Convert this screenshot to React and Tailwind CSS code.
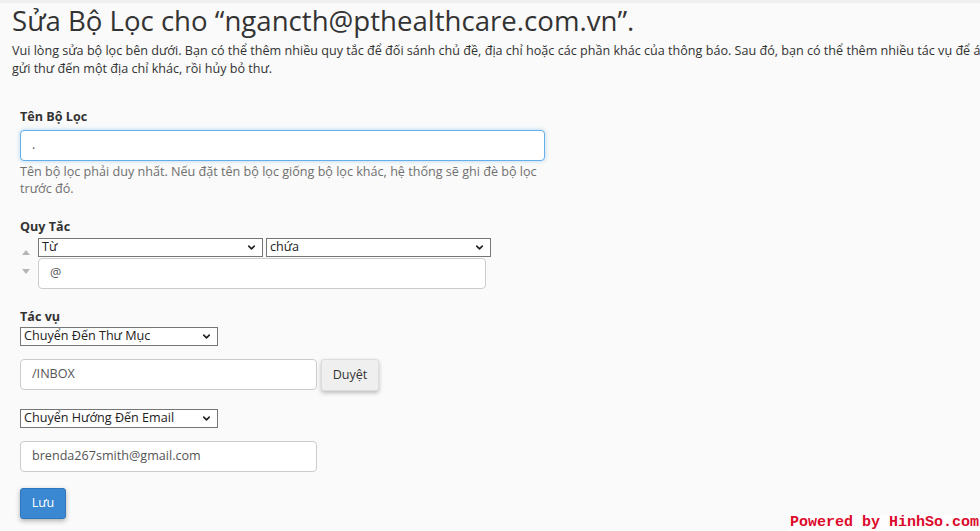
import { ChevronDown } from "lucide-react";

const font = { fontFamily: '"Open Sans", "Noto Sans", sans-serif' };

function FakeSelect({ value, className = "" }) {
  return (
    <div className={`flex items-center justify-between bg-white border border-[#767676] pl-[3px] pr-[5px] text-[12.6px] leading-none text-[#222] ${className}`}>
      <span>{value}</span>
      <ChevronDown className="w-[11px] h-[11px] text-[#222]" strokeWidth={3.5} />
    </div>
  );
}

function TextBox({ value, className = "" }) {
  return (
    <div className={`flex items-center bg-white border border-[#ccc] rounded-[4px] px-[11px] text-[12.6px] text-[#555] ${className}`}>
      {value}
    </div>
  );
}

export default function App() {
  return (
    <div className="w-[980px] h-[531px] overflow-hidden bg-[#fafafa] border-t-[3px] border-[#efefef] relative" style={font}>
      <div className="pl-3">
        <h1 className="text-[27.6px] leading-[36px] text-[#333] mt-[-1px] whitespace-nowrap">
          Sửa Bộ Lọc cho “ngancth@pthealthcare.com.vn”.
        </h1>
        <div className="mt-[4px] text-[12.6px] leading-[18px] text-[#333] whitespace-nowrap">
          <p>Vui lòng sửa bộ lọc bên dưới. Bạn có thể thêm nhiều quy tắc để đối sánh chủ đề, địa chỉ hoặc các phần khác của thông báo. Sau đó, bạn có thể thêm nhiều tác vụ để áp dụng cho thư như</p>
          <p>gửi thư đến một địa chỉ khác, rồi hủy bỏ thư.</p>
        </div>
      </div>

      <div className="pl-5 mt-[30px] w-[545px]">
        <label className="block text-[12.6px] font-bold leading-[18px] text-[#333]">Tên Bộ Lọc</label>
        <div className="mt-[4px] h-[31px] bg-white border border-[#66afe9] rounded-[4px] shadow-[0_0_4px_rgba(102,175,233,0.5)] flex items-center px-[11px] text-[12.6px] text-[#555]">.</div>
        <p className="mt-[2px] text-[12.6px] leading-[17px] text-[#707070]">
          Tên bộ lọc phải duy nhất. Nếu đặt tên bộ lọc giống bộ lọc khác, hệ thống sẽ ghi đè bộ lọc trước đó.
        </p>

        <label className="block mt-[21px] text-[12.6px] font-bold leading-[18px] text-[#333]">Quy Tắc</label>
        <div className="flex mt-[2px]">
          <div className="w-[18px] flex flex-col items-start pt-[12px] pl-[2px] gap-[14px]">
            <div className="w-0 h-0 border-l-[4px] border-r-[4px] border-b-[5px] border-l-transparent border-r-transparent border-b-[#b5b5b5]" />
            <div className="w-0 h-0 border-l-[4px] border-r-[4px] border-t-[5px] border-l-transparent border-r-transparent border-t-[#b5b5b5]" />
          </div>
          <div className="flex flex-col">
            <div className="flex gap-[3px]">
              <FakeSelect value="Từ" className="w-[225px] h-[19px]" />
              <FakeSelect value="chứa" className="w-[225px] h-[19px]" />
            </div>
            <TextBox value="@" className="w-[448px] h-[31px] mt-[1px]" />
          </div>
        </div>

        <label className="block mt-[19px] text-[12.6px] font-bold leading-[18px] text-[#333]">Tác vụ</label>
        <FakeSelect value="Chuyển Đến Thư Mục" className="w-[198px] h-[19px] mt-[1px]" />
        <div className="flex gap-[4px] mt-[13px]">
          <TextBox value="/INBOX" className="w-[297px] h-[31px]" />
          <div className="w-[58px] h-[32px] flex items-center justify-center bg-[#efefef] border border-[#ddd] rounded-[3px] shadow-[0_2px_4px_rgba(0,0,0,0.25)] text-[12.6px] text-[#333]">Duyệt</div>
        </div>

        <FakeSelect value="Chuyển Hướng Đến Email" className="w-[198px] h-[19px] mt-[18px]" />
        <TextBox value="brenda267smith@gmail.com" className="w-[297px] h-[31px] mt-[13px]" />

        <div className="mt-[16px] w-[46px] h-[31px] flex items-center justify-center bg-[#3a87d2] border border-[#2f77bc] rounded-[3px] shadow-[0_2px_5px_rgba(0,0,0,0.3)] text-[12.6px] text-white">Lưu</div>
      </div>

      <div className="absolute right-0 bottom-0 pr-[1px] text-[15px] leading-[16px] font-bold text-[#dc0a2c] bg-white/60" style={{ fontFamily: '"Liberation Mono", "DejaVu Sans Mono", monospace' }}>
        Powered by HinhSo.com
      </div>
    </div>
  );
}
